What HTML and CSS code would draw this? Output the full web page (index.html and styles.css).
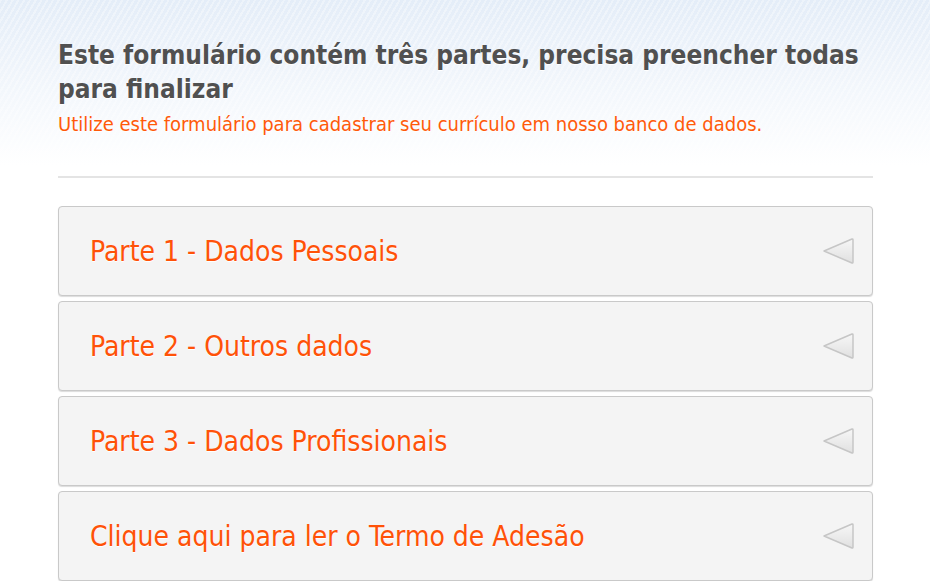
FILE: index.html
```html
<!DOCTYPE html>
<html lang="pt-BR">
<head>
  <meta charset="UTF-8" />
  <meta name="viewport" content="width=device-width, initial-scale=1.0"/>
  <title>Cadastro de Currículo</title>
  <link rel="stylesheet" href="styles.css">
</head>
<body>

  <svg width="0" height="0" class="defs">
    <defs>
      <linearGradient id="arrowFill" x1="0" y1="0" x2="0" y2="1">
        <stop offset="0" stop-color="#f7f7f7"/>
        <stop offset="1" stop-color="#e0e0e0"/>
      </linearGradient>
    </defs>
  </svg>

  <div class="wrap">
    <div class="intro">
      <h1>Este formulário contém três partes, precisa preencher todas para finalizar</h1>
      <p class="lead">Utilize este formulário para cadastrar seu currículo em nosso banco de dados.</p>
    </div>

    <hr class="sep">

    <div class="steps">
      <a class="step" href="#parte1">
        <span class="step-title">Parte 1 - Dados Pessoais</span>
        <svg class="arrow" width="32" height="28" viewBox="0 0 32 28"><path d="M2 14 L30 2 Q31 1.6 31 3 L31 25 Q31 26.4 30 26 Z" /></svg>
      </a>
      <a class="step" href="#parte2">
        <span class="step-title">Parte 2 - Outros dados</span>
        <svg class="arrow" width="32" height="28" viewBox="0 0 32 28"><path d="M2 14 L30 2 Q31 1.6 31 3 L31 25 Q31 26.4 30 26 Z" /></svg>
      </a>
      <a class="step" href="#parte3">
        <span class="step-title">Parte 3 - Dados Profissionais</span>
        <svg class="arrow" width="32" height="28" viewBox="0 0 32 28"><path d="M2 14 L30 2 Q31 1.6 31 3 L31 25 Q31 26.4 30 26 Z" /></svg>
      </a>
      <a class="step" href="#termo">
        <span class="step-title">Clique aqui para ler o Termo de Adesão</span>
        <svg class="arrow" width="32" height="28" viewBox="0 0 32 28"><path d="M2 14 L30 2 Q31 1.6 31 3 L31 25 Q31 26.4 30 26 Z" /></svg>
      </a>
    </div>
  </div>

</body>
</html>
```

FILE: styles.css
```css
body {
  margin: 0;
  font-family: "DejaVu Sans Condensed", "DejaVu Sans", Tahoma, sans-serif;
  background-color: #fff;
  background-image:
    repeating-linear-gradient(120deg, rgba(255,255,255,0.35) 0 2px, rgba(255,255,255,0) 2px 5px),
    linear-gradient(to bottom, #e4edf8 0, #f3f7fc 90px, #fff 165px);
  background-size: 100% 170px;
  background-repeat: no-repeat;
  overflow: hidden;
}

.defs {
  position: absolute;
}

.wrap {
  width: 815px;
  margin-left: 58px;
}

.intro {
  padding-top: 38px;
}

.intro h1 {
  margin: 0;
  font-size: 26px;
  line-height: 34px;
  font-weight: bold;
  color: #505050;
  text-shadow: 0 1px 0 #fff;
}

.lead {
  margin: 6px 0 0;
  font-size: 20px;
  line-height: 24px;
  color: #ff5a0a;
  text-shadow: 0 1px 0 #fff;
}

.sep {
  margin: 40px 0 28px;
  border: 0;
  border-top: 2px solid #e4e4e4;
}

.steps {
  display: flex;
  flex-direction: column;
  gap: 5px;
}

.step {
  display: flex;
  align-items: center;
  justify-content: space-between;
  height: 88px;
  padding: 0 18px 0 31px;
  background: #f4f4f4;
  border: 1px solid #c9c9c9;
  border-radius: 4px;
  box-shadow: 0 1px 1px rgba(0,0,0,0.14);
  text-decoration: none;
}

.step-title {
  font-size: 28px;
  color: #ff5208;
  text-shadow: 0 1px 0 #fff;
}

.arrow path {
  fill: url(#arrowFill);
  stroke: #c6c6c6;
  stroke-width: 1.5;
  stroke-linejoin: round;
}
```
